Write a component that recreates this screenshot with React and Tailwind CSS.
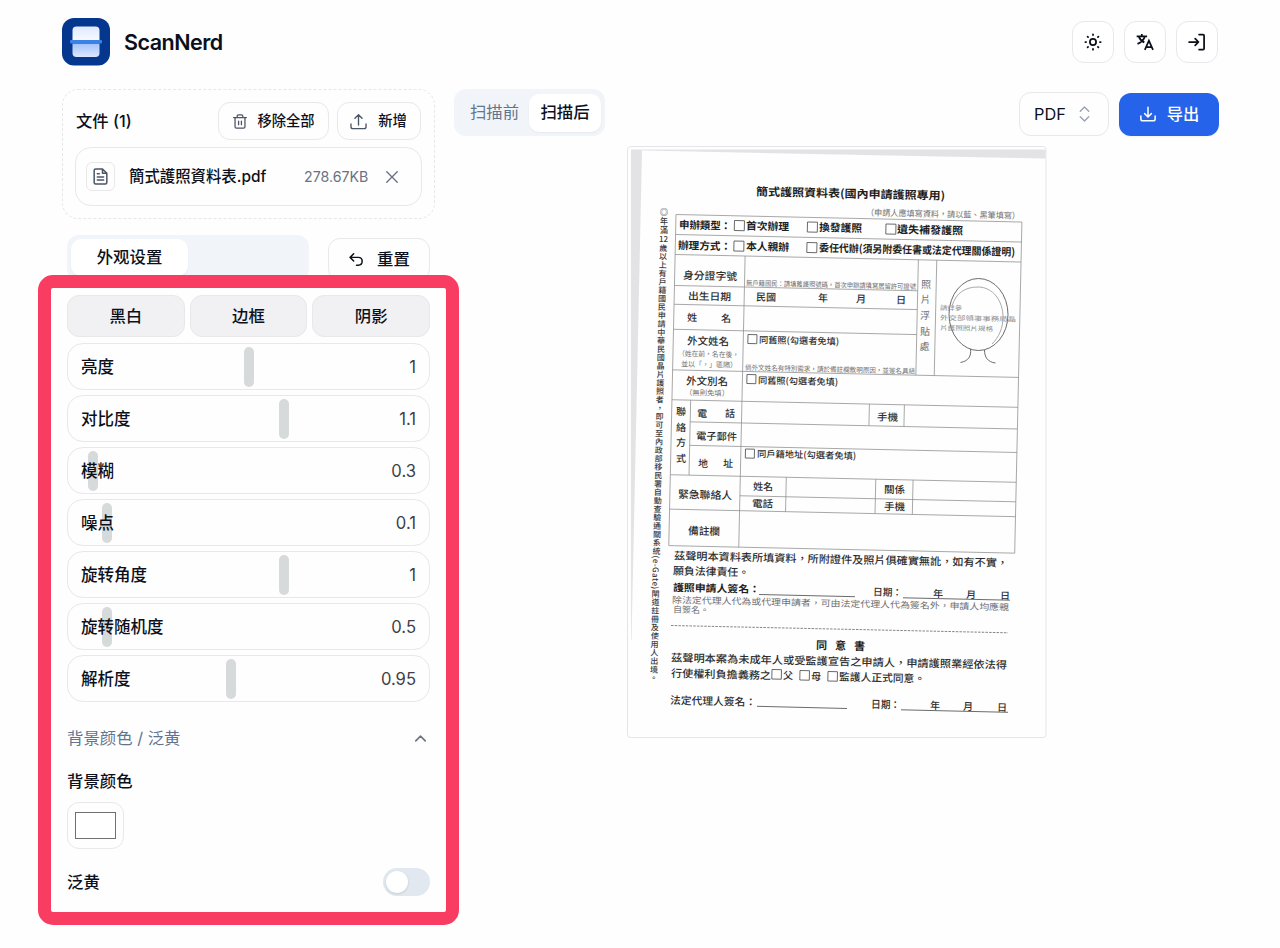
import React from "react";
import { ChevronUp } from "lucide-react";

const SLIDERS = [
  { label: "亮度", value: "1", left: 176 },
  { label: "对比度", value: "1.1", left: 211 },
  { label: "模糊", value: "0.3", left: 20 },
  { label: "噪点", value: "0.1", left: 34 },
  { label: "旋转角度", value: "1", left: 211 },
  { label: "旋转随机度", value: "0.5", left: 34 },
  { label: "解析度", value: "0.95", left: 158 },
];

function Logo() {
  return (
    <svg className="size-12 shrink-0" viewBox="0 0 48 48">
      <defs>
        <linearGradient id="paperTop" x1="0" y1="0" x2="0" y2="1">
          <stop offset="0" stopColor="#dfe9ff" />
          <stop offset="1" stopColor="#f6f9ff" />
        </linearGradient>
        <linearGradient id="paperBottom" x1="0" y1="0" x2="0" y2="1">
          <stop offset="0" stopColor="#a3c2fb" />
          <stop offset="1" stopColor="#dce8ff" />
        </linearGradient>
      </defs>
      <rect width="48" height="47.500" rx="12" fill="#06378f" />
      <path d="M10.500 22V12.500q0-4 4-4h19q4 0 4 4V22z" fill="url(#paperTop)" />
      <path d="M10.500 25.500v9.500q0 4 4 4h19q4 0 4-4v-9.500z" fill="url(#paperBottom)" />
      <rect x="8" y="22" width="32" height="3.500" rx="1" fill="#3b82e6" />
    </svg>
  );
}

function Icon({ className, width = 1.5, children }) {
  return (
    <svg className={className} viewBox="0 0 24 24" fill="none" stroke="currentColor" strokeWidth={width} strokeLinecap="round" strokeLinejoin="round">
      {children}
    </svg>
  );
}

function Header() {
  const box = "flex size-[42px] items-center justify-center rounded-xl border border-[#e8e8eb] bg-white text-[#0b0f19]";
  return (
    <header className="flex h-12 items-center justify-between">
      <div className="flex items-center gap-3.5">
        <Logo />
        <span className="text-[21.500px] font-semibold tracking-[-0.5px] text-[#0b0f19]">ScanNerd</span>
      </div>
      <div className="mr-px mb-px flex gap-2.5">
        <button className={box}>
          <Icon className="size-5" width={2.1}>
            <circle cx="12" cy="12" r="3.700" />
            <path d="M12 2.800v.9M12 20.300v.9M2.800 12h.9M20.300 12h.9M5.500 5.500l.6.6M17.900 17.900l.6.6M18.500 5.500l-.6.6M6.100 17.900l-.6.6" />
          </Icon>
        </button>
        <button className={box}>
          <svg className="size-5" viewBox="0 0 24 24" fill="none" stroke="currentColor" strokeWidth="2.100">
            <path d="M2 5.200h12.500M8.200 2.500v2.700M4.600 5.500c1.200 3.300 3.400 5.500 6.600 7M11.800 5.500c-1 3.800-4 6.800-8.800 8.700" />
            <path d="M11.800 21.500 16.700 10.500 21.600 21.500M13.300 18h6.800" />
          </svg>
        </button>
        <button className={box}>
          <Icon className="size-5" width={2.1}>
            <path d="M2.500 12h11M9.800 8 13.800 12l-4 4M14.500 3h4.800q1.200 0 1.200 1.200v15.600q0 1.200-1.200 1.200h-4.800" />
          </Icon>
        </button>
      </div>
    </header>
  );
}

function FileCard() {
  return (
    <section className="h-[130px] w-[373px] rounded-2xl border border-dashed border-gray-200 px-3 py-3">
      <div className="mr-px -ml-px flex h-[38px] items-center">
        <h2 className="flex-1 pl-0.5 text-[16.3px] font-medium">文件 (1)</h2>
        <button className="flex h-full w-[111px] items-center justify-center gap-[9px] rounded-xl border border-[#e8e8eb] text-[14.300px] font-medium">
          <svg className="h-[17px] w-4 text-gray-600" viewBox="0 0 22 24" fill="none" stroke="currentColor" strokeWidth="1.800" strokeLinecap="round" strokeLinejoin="round">
            <path d="M2 6.500h18M7 6.500V4.500Q7 2.500 9 2.500h4q2 0 2 2v2M4 6.500v13q0 2 2 2h10q2 0 2-2v-13M9 11.500v5M13 11.500v5" />
          </svg>
          移除全部
        </button>
        <button className="ml-2 flex h-full w-[84px] items-center justify-center gap-2.5 rounded-xl border border-[#e8e8eb] pr-0.5 text-[14.300px] font-medium">
          <Icon className="size-[19px] text-gray-600" width={1.700}>
            <path d="M12 16.500V3.500M7.500 8 12 3.500 16.500 8M2.500 15v3.500q0 2.500 2.500 2.500h14q2.500 0 2.500-2.500V15" />
          </Icon>
          新增
        </button>
      </div>
      <div className="mt-[7px] flex h-[59px] items-center rounded-2xl border border-[#e8e8eb] pl-2.5">
        <span className="flex size-[29px] items-center justify-center rounded-md border border-[#e8e8eb]">
          <Icon className="size-[19px] text-gray-600" width={1.900}>
            <path d="M14.500 2.500H6q-2 0-2 2v15q0 2 2 2h12q2 0 2-2V8zM14.500 2.500V8H20M8 8.500h2.500M8 12.500h8M8 16.500h8" />
          </Icon>
        </span>
        <span className="ml-3.5 w-[175px] text-[15.400px] font-medium whitespace-nowrap">簡式護照資料表.pdf</span>
        <span className="w-[65px] text-[14.200px] whitespace-nowrap text-gray-500">278.67KB</span>
        <Icon className="ml-4 size-[14px] text-gray-500" width={2.4}>
          <path d="M3 3l18 18M21 3 3 21" />
        </Icon>
      </div>
    </section>
  );
}

function SliderRow({ label, value, left }) {
  return (
    <div className="relative flex h-[47px] items-center justify-between rounded-2xl border border-[#e8e8eb] px-[13px] pt-px">
      <span className="absolute top-[3px] h-[40px] w-2.5 rounded-full bg-[#d6dada]" style={{ left }} />
      <span className="relative text-[16.500px] font-medium">{label}</span>
      <span className="relative text-[16.600px] text-[#3f4046]">{value}</span>
    </div>
  );
}

function Settings() {
  return (
    <section className="mt-4 ml-[5px] w-[363px]">
      <div className="flex h-[53px] justify-between">
        <div className="h-[46px] w-[242px] rounded-xl bg-slate-100 p-1">
          <div className="flex h-[37px] w-[117px] items-center justify-center rounded-[10px] bg-white text-[16.400px] font-medium shadow-xs">外观设置</div>
        </div>
        <button className="mt-[3px] flex h-[43px] w-[102px] items-center justify-center gap-3 rounded-xl border border-[#e8e8eb] text-[16.400px] font-medium">
          <Icon className="size-[17px]" width={2.1}>
            <path d="M8 4 3 9l5 5M3 9h11.500q5.500 0 5.500 5.500T14.500 20H12" />
          </Icon>
          重置
        </button>
      </div>
      <div className="mt-[7px] grid grid-cols-3 gap-[5px]">
        {["黑白", "边框", "阴影"].map((t) => (
          <button key={t} className="h-[42px] rounded-xl border border-[#e8e8eb] bg-[#f1f1f4] text-[16.400px] font-medium">{t}</button>
        ))}
      </div>
      <div className="mt-[6px] flex flex-col gap-[5.080px]">
        {SLIDERS.map((s) => (
          <SliderRow key={s.label} {...s} />
        ))}
      </div>
      <div className="mt-[24px] flex h-6 items-center justify-between text-[16.400px] font-normal text-slate-500">
        <span>背景颜色 / 泛黄</span>
        <ChevronUp className="size-[19px] text-gray-500" strokeWidth={2} />
      </div>
      <h3 className="mt-[19px] text-[16.400px] leading-6 font-medium">背景颜色</h3>
      <div className="mt-[9px] flex h-[47px] w-[57px] items-center justify-center rounded-xl border border-[#e8e8eb]">
        <div className="h-[27px] w-[41px] border border-[#707070] bg-white" />
      </div>
      <div className="mt-[19px] flex items-center justify-between">
        <span className="text-[16.400px] font-medium">泛黄</span>
        <span className="flex h-7 w-[47px] items-center rounded-full bg-slate-200 px-[3px]">
          <span className="size-[22px] rounded-full bg-white shadow-sm" />
        </span>
      </div>
    </section>
  );
}

// Ruling of the form in its own axes: [x1, y1, x2, y2]
const RULES = [
  [0, 0, 346, 0], [0, 20, 346, 20], [0, 40, 346, 40],
  [0, 71, 243.3, 71], [0, 89.8, 243.3, 89.8], [0, 114.8, 243.3, 114.8],
  [0, 155.4, 346, 155.4], [0, 185.3, 346, 185.3], [18.7, 207, 346, 207],
  [18.7, 230.5, 346, 230.5], [0, 260.3, 346, 260.3], [70, 279.8, 346, 279.8],
  [0, 294.7, 346, 294.7], [0, 331.2, 346, 331.2],
  [0, 0, 0, 331.2], [346, 0, 346, 331.2], [70, 40, 70, 331.2], [18.7, 185.3, 18.7, 260.3],
  [243.3, 40, 243.3, 155.4], [261.7, 40, 261.7, 155.4],
  [197.5, 185.3, 197.5, 207], [232.5, 185.3, 232.5, 207],
  [116, 260.3, 116, 294.7], [205.5, 260.3, 205.5, 294.7], [242.8, 260.3, 242.8, 294.7],
];

// Form texts: [x, baseline, length, size, text, tone]
const TEXTS = [
  [756, 195.5, 189, 11, "簡式護照資料表(國內申請護照專用)", "b"],
  [866, 215.5, 154, 8.5, "（申請人應填寫資料，請以藍、黑筆填寫）", "g"],
  [679, 228.5, 52, 10.5, "申辦類型：", "b"],
  [746, 229.5, 43, 10.5, "首次辦理", "b"],
  [819, 231, 43, 10.5, "換發護照", "b"],
  [897, 233, 66, 10.5, "遺失補發護照", "b"],
  [678, 249, 53, 10.5, "辦理方式：", "b"],
  [746, 250, 43, 10.5, "本人親辦", "b"],
  [819, 251.5, 196, 10.5, "委任代辦(須另附委任書或法定代理關係證明)", "b"],
  [683, 279, 54, 10.5, "身分證字號"],
  [746, 285.5, 170, 7, "無戶籍國民：請填舊護照號碼，首次申辦請填寫居留許可證號", "g"],
  [688, 299.5, 43, 10, "出生日期"], [756, 300.5, 20, 10, "民國"],
  [818, 301.5, 10, 10, "年"], [856, 302.5, 10, 10, "月"], [896, 303.5, 10, 10, "日"],
  [687, 321, 10, 10, "姓"], [721, 322, 10, 10, "名"],
  [687, 344.5, 42, 10.5, "外文姓名"],
  [678, 356, 61, 7.2, "（姓在前，名在後，", "g"], [681, 366.5, 56, 7.2, "並以「，」區隔）", "g"],
  [759, 343, 80, 9, "同舊照(勾選者免填)"],
  [745, 370, 170, 7, "倘外文姓名有特別需求，請於備註欄敘明原因，並簽名具結", "g"],
  [686, 384.5, 42, 10.5, "外文別名"], [685, 395, 44, 7.2, "（無則免填）", "g"],
  [758, 383.500, 80, 9, "同舊照(勾選者免填)"],
  [676, 415, 10, 10, "聯"], [676, 431, 10, 10, "絡"], [676, 446, 10, 10, "方"], [676, 462, 10, 10, "式"],
  [697, 417, 10, 10, "電"], [725, 417, 10, 10, "話"], [696, 439.5, 41, 10, "電子郵件"],
  [698, 467, 10, 10, "地"], [723, 467, 10, 10, "址"],
  [757, 457, 99, 9, "同戶籍地址(勾選者免填)"],
  [877, 420.5, 21, 10, "手機"],
  [678, 498, 54, 10.5, "緊急聯絡人"], [753, 490, 20, 10, "姓名"], [752, 507, 21, 10, "電話"],
  [884, 493, 21, 10, "關係"], [884, 510, 21, 10, "手機"],
  [688, 534.5, 32, 10.5, "備註欄"],
  [674, 559.5, 334, 10.5, "茲聲明本資料表所填資料，所附證件及照片俱確實無訛，如有不實，"],
  [673, 574.5, 76, 10.5, "願負法律責任。"],
  [673, 591, 87, 10, "護照申請人簽名：", "b"], [873, 595.5, 29, 10, "日期："],
  [933, 597, 10, 9.5, "年"], [966, 598, 10, 9.5, "月"], [1000, 599, 10, 9.5, "日"],
  [672, 603, 337, 8.8, "除法定代理人代為或代理申請者，可由法定代理人代為簽名外，申請人均應親", "g"],
  [673, 612.5, 36, 8.8, "自簽名。", "g"],
  [816, 649, 11, 11, "同", "b"], [835, 649.5, 11, 11, "意", "b"], [854, 650, 11, 11, "書", "b"],
  [671, 661.5, 336, 10.5, "茲聲明本案為未成年人或受監護宣告之申請人，申請護照業經依法得"],
  [671, 677, 100, 10.5, "行使權利負擔義務之"], [783, 679, 10, 10, "父"], [811, 680, 10, 10, "母"],
  [839, 680.5, 86, 10.5, "監護人正式同意。"],
  [670, 704, 86, 10.5, "法定代理人簽名："], [871, 708, 29, 10.5, "日期："],
  [930, 709, 10, 10, "年"], [963, 710, 10, 10, "月"], [997, 711, 10, 10, "日"],
  [921, 288, 10, 10, "照", "g"], [920.5, 303, 10, 10, "片", "g"], [920, 319, 10, 10, "浮", "g"], [920, 335, 10, 10, "貼", "g"], [919.5, 350, 10, 10, "處", "g"],
  [940, 310, 22, 6.5, "請詳參", "l"], [940, 320, 76, 6.5, "外交部領事事務局晶", "l"], [940, 330, 53, 6.5, "片護照照片規格", "l"],
];

const CHECKS = [
  [734.5, 220.5, 10], [807.5, 222, 10], [886, 224, 10], [734, 241, 10], [807, 242.5, 10],
  [748, 334.5, 9], [747, 374.5, 9], [745.5, 449, 9], [772, 669.5, 9.5], [800, 670.5, 9.5], [828, 671.5, 9.5],
];

const TONES = { b: "#1f1f1f", g: "#707070", l: "#8e8e8e" };

function FormPage() {
  return (
    <svg className="h-[592px] w-[420px]" viewBox="627 146 420 592" fontFamily="'Noto Sans CJK TC', sans-serif">
      <rect x="627.5" y="146.500" width="418.500" height="591" rx="3" fill="#fefefe" stroke="#e4e5e8" />
      <path d="M631 149.500H1045.500V158.500L642 150.500L631.500 640H631z" fill="#e3e3e5" />
      <g transform="translate(676 214.500) rotate(1.25)" stroke="#8c8c8c" strokeWidth="0.75">
        {RULES.map(([a, b, c, d], i) => (
          <line key={i} x1={a} y1={b} x2={c} y2={d} />
        ))}
      </g>
      <g fill="none" stroke="#5a5a5a" strokeWidth="0.9">
        {CHECKS.map(([x, cy, s], i) => (
          <rect key={i} x={x} y={cy} width={s} height={s} transform={`rotate(1.25 ${x} ${cy})`} />
        ))}
        <path d="M759 594.500 855 596.700M903 597.800 1010 600.200M757 706.300 847 708.500M901 709.800 1008 712.300" />
        <path d="M671 625.500 1008 632.800" strokeDasharray="2.500 1.200" stroke="#777" />
        <ellipse cx="978.500" cy="314.500" rx="29.500" ry="36" />
        <path d="M952 306c4-13 13-19 26-19 15 0 25 14 25 30 0 11-4 20-11 27" stroke="#a0a0a0" />
        <path d="M970.500 349c1 7-2 12-10 13.500M984.500 350c0 7 3 12 11 13" />
      </g>
      {TEXTS.map(([x, ty, len, size, text, tone], i) => (
        <text key={i} x={x} y={ty} fontSize={size} textLength={len} lengthAdjust="spacingAndGlyphs" fontWeight={tone === "b" ? 700 : tone ? 400 : 500} fill={TONES[tone] || "#2e2e2e"} transform={`rotate(1.25 ${x} ${ty})`}>
          {text}
        </text>
      ))}
      <g fontSize="8" fontWeight="500" fill="#3a3a3a">
        <text x="664" y="208" className="[writing-mode:vertical-rl]" textLength="26">◎年滿</text>
        <text x="663.500" y="242" textAnchor="middle">12</text>
        <text x="663.300" y="244" className="[writing-mode:vertical-rl]" textLength="438" transform="rotate(1.25 663.3 244)">
          歲以上有戶籍國民申請中華民國晶片護照者，即可至內政部移民署自動查驗通關系統(e-Gate)閘道註冊及使用人出境。
        </text>
      </g>
    </svg>
  );
}

function Preview() {
  return (
    <main className="flex w-[765px] flex-col">
      <div className="flex h-[47px] items-start justify-between">
        <div className="flex h-[47px] w-[151px] items-center rounded-xl bg-slate-100 p-1 text-[16.400px]">
          <span className="flex-1 pl-0.5 text-center font-normal text-slate-500">扫描前</span>
          <span className="flex h-[38px] w-[72px] items-center justify-center rounded-[10px] bg-white font-medium shadow-xs">扫描后</span>
        </div>
        <div className="mt-[3px] flex items-center gap-2.5">
          <button className="flex h-[44px] w-[90px] items-center justify-between rounded-xl border border-[#e8e8eb] pr-[15px] pl-3.5 text-[16.300px]">
            PDF
            <Icon className="h-[18px] w-[17px] text-gray-400" width={1.900}>
              <path d="M6 8l6-6 6 6M6 16l6 6 6-6" />
            </Icon>
          </button>
          <button className="flex h-[43px] w-[100px] items-center justify-center gap-2.5 rounded-xl bg-[#2563eb] text-[16.300px] font-medium text-white shadow-xs">
            <Icon className="size-[18px]" width={2}>
              <path d="M12 3v12.500M7.500 11.500l4.500 4.500 4.500-4.500M2.500 14.500v4q0 2.500 2.500 2.500h14q2.500 0 2.500-2.500v-4" />
            </Icon>
            导出
          </button>
        </div>
      </div>
      <div className="mt-2.5 pl-[173px]">
        <FormPage />
      </div>
    </main>
  );
}

export default function App() {
  return (
    <div className="relative h-[948px] w-[1280px] overflow-hidden bg-[#fefefe] pt-[18px] pr-[61px] pl-[62px] font-['Inter','Noto_Sans_CJK_SC',sans-serif] text-[#0c101b]">
      <Header />
      <div className="mt-[23px] flex gap-[19px]">
        <aside className="w-[373px] shrink-0">
          <FileCard />
          <Settings />
        </aside>
        <Preview />
      </div>
      <div className="pointer-events-none absolute top-[275px] left-[38px] h-[650px] w-[421px] rounded-[15px] border-[13px] border-[#f93d62]" />
    </div>
  );
}
